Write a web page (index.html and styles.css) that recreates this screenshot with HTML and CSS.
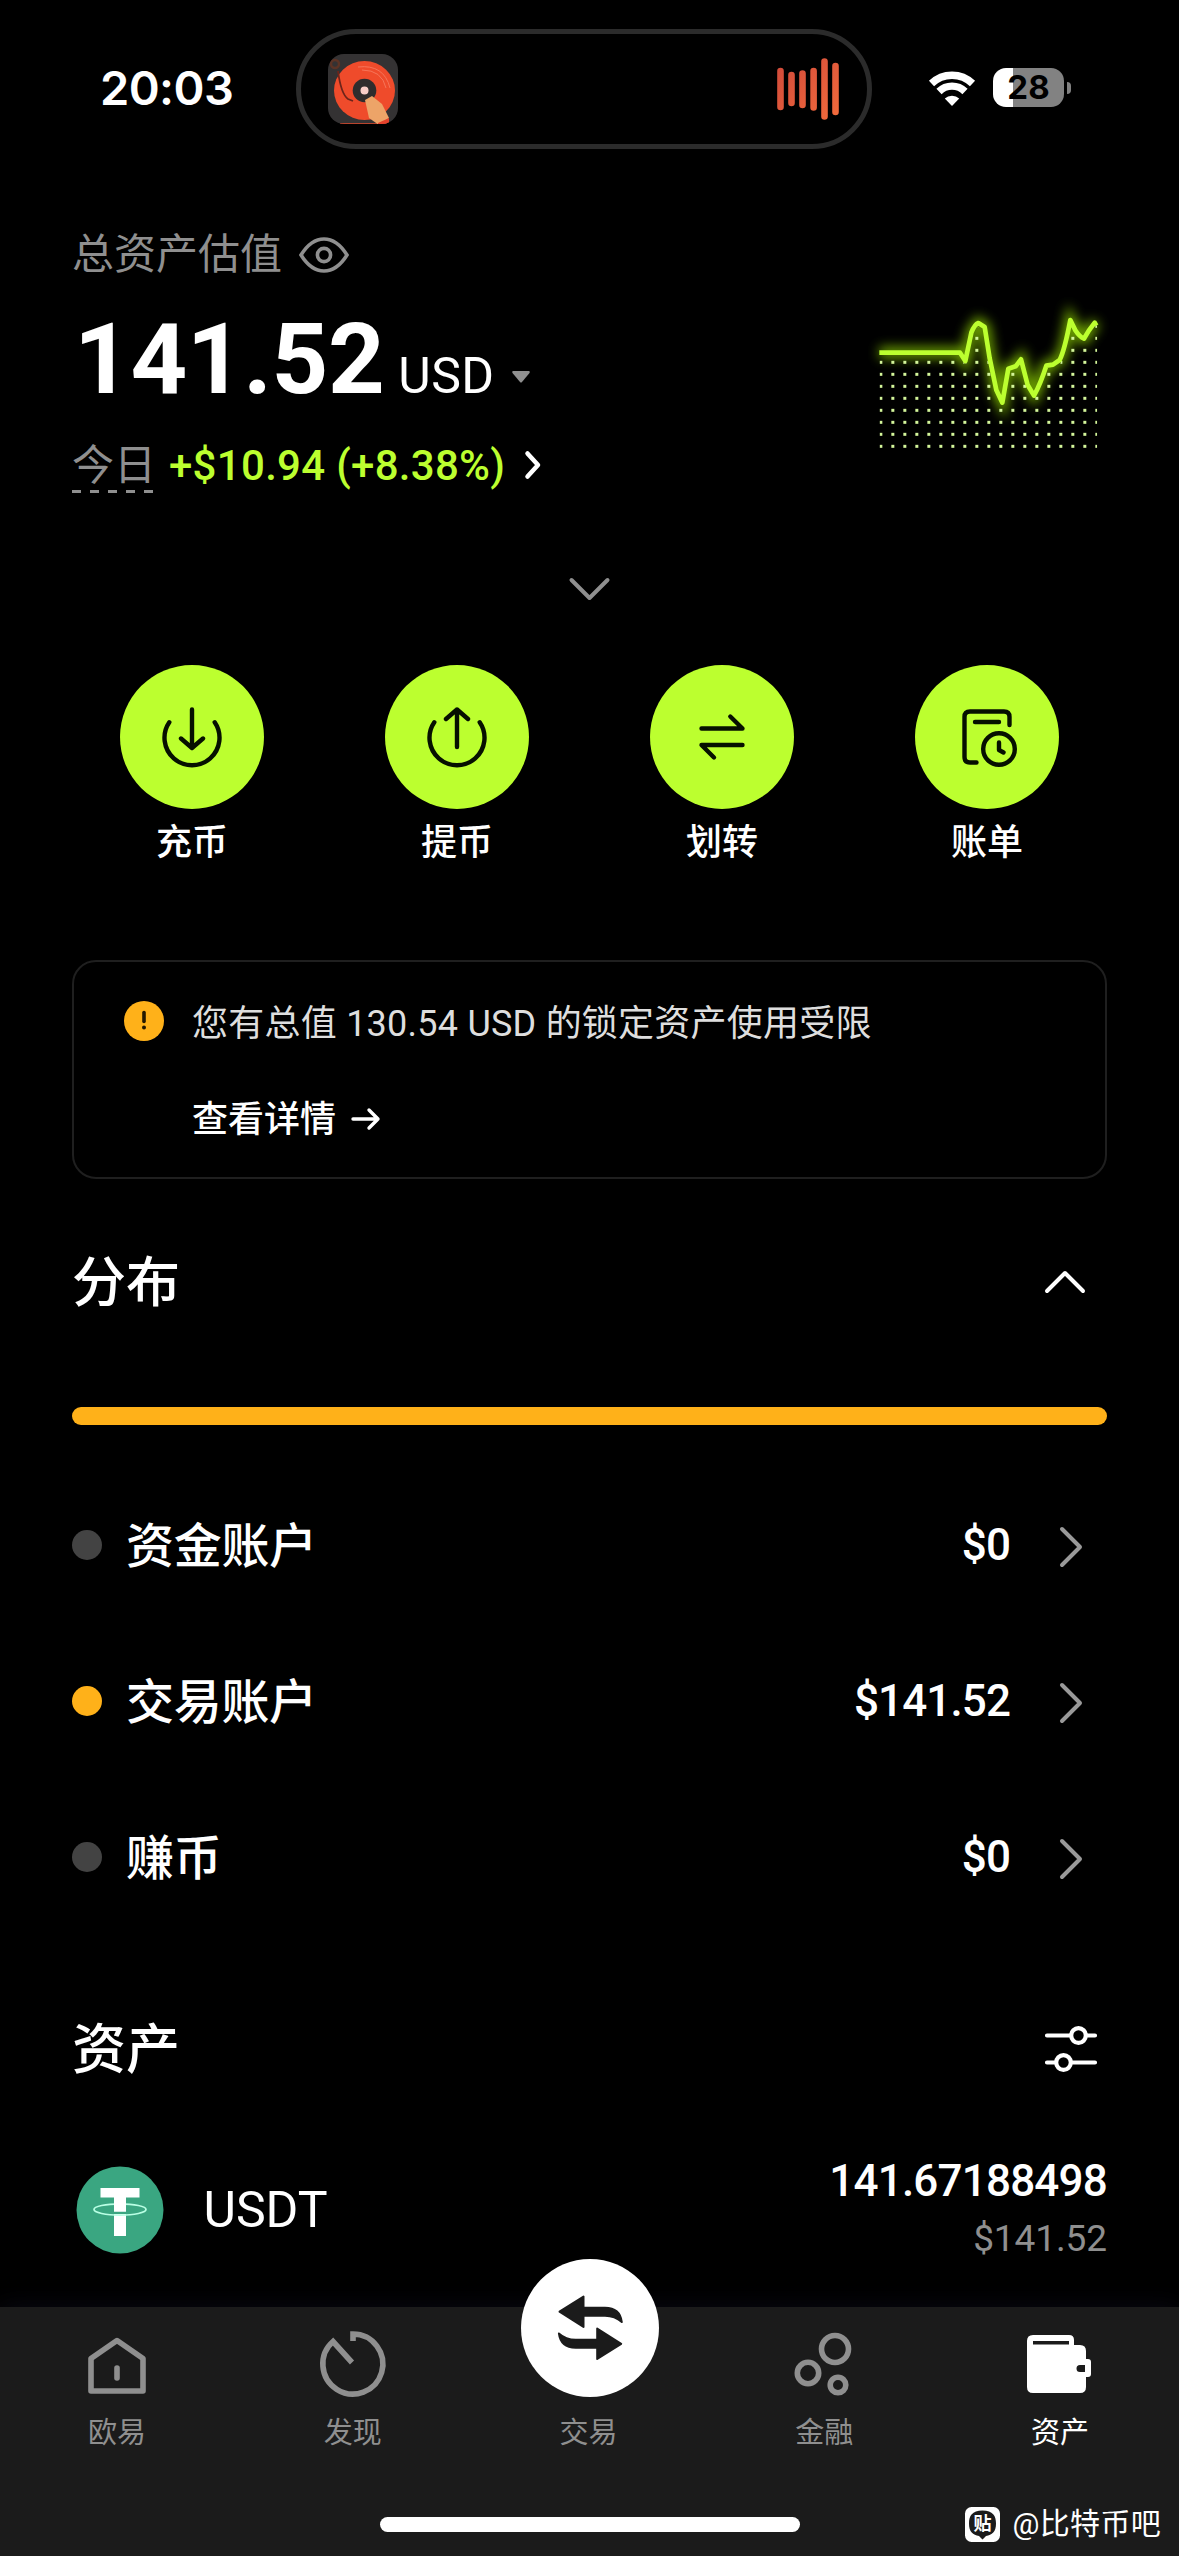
FILE: index.html
```html
<!DOCTYPE html>
<html lang="zh-CN">
<head>
<meta charset="utf-8">
<title>资产</title>
<link rel="stylesheet" href="styles.css">
</head>
<body>
<header class="status">
  <div class="status-time">20:03</div>
  <div class="island">
    <svg class="album" viewBox="0 0 70 70">
      <defs><clipPath id="cover"><rect width="70" height="70" rx="16"/></clipPath></defs>
      <g clip-path="url(#cover)">
        <rect width="70" height="70" fill="#343233"/>
        <circle cx="7" cy="10" r="4" fill="none" stroke="#5b3325" stroke-width="2.5"/>
        <path d="M12 69h50v2H12z" fill="#b8432c"/>
        <ellipse cx="36.500" cy="36.500" rx="30.500" ry="29.500" fill="#ef4b2b"/>
        <path d="M30 13q26-3 32 21M34 16q20 0 24 18" fill="none" stroke="#f5755a" stroke-width="1"/>
        <circle cx="36.500" cy="36.500" r="11.800" fill="#2f2c2d"/>
        <circle cx="36.500" cy="36.500" r="4" fill="#f7cdc8"/>
        <path d="M10 17Q13 40 20 45L25 47" fill="none" stroke="#6d241a" stroke-width="1.800"/>
        <path d="M37 46L44 42L54 50L61 64L51 71L41 64Z" fill="#eda468"/>
        <path d="M50 69L61 64V70H50Z" fill="#e5422c"/>
      </g>
    </svg>
    <svg class="wave" viewBox="776 56 64 66">
      <defs><linearGradient id="waveFill" gradientUnits="userSpaceOnUse" x1="776" y1="60" x2="840" y2="120"><stop offset="0" stop-color="#d0493a"/><stop offset="1" stop-color="#f46c3c"/></linearGradient></defs>
      <path d="M780.500 71v36M791.500 75v28M802.500 73.500v31.500M813.600 71v36.500M824.500 61.500v55M835.500 66v46" stroke="url(#waveFill)" stroke-width="6.600" stroke-linecap="round"/>
    </svg>
  </div>
  <svg class="wifi" viewBox="0 0 48 36">
    <path d="M3.500 13.500a29.500 29.500 0 0 1 41 0M11 21.500a18.500 18.500 0 0 1 26 0" fill="none" stroke="#fff" stroke-width="7.400"/>
    <path d="M24 36L16.800 28.600a10.300 10.300 0 0 1 14.400 0Z" fill="#fff"/>
  </svg>
  <div class="battery">28</div>
  <div class="battery-cap"></div>
</header>

<main class="content">
  <section class="summary">
    <div>
      <div class="summary-label">总资产估值
        <svg class="eye" viewBox="0 0 50 36"><path d="M2 18Q12 2 25 2T48 18Q38 34 25 34T2 18Z"/><circle cx="25" cy="18" r="6.600"/></svg>
      </div>
      <div class="amount"><span class="amount-value">141.52</span><span class="amount-unit">USD</span><svg class="caret" viewBox="0 0 18 12"><path d="M1 0h16q1.500 .5.500 2L10 11q-1 1-2 0L.500 2Q-.500.500 1 0Z"/></svg></div>
      <div class="today"><span class="today-label">今日</span><span class="gain">+$10.94 (+8.38%)</span><svg class="gain-arrow" viewBox="0 0 16 28"><path d="M2.500 2.500L13 14L2.500 25.500"/></svg></div>
    </div>
    <svg class="chart" viewBox="50 30 720 460">
      <defs>
        <pattern id="dots" patternUnits="userSpaceOnUse" x="87" y="140.500" width="36" height="36"><rect width="9" height="9" fill="#d3f59a"/></pattern>
        <clipPath id="under"><path d="M87 200H330L345 226L366 130L384 112L398 118L415 205L432 290L456 350L478 240L510 220L528 290L550 330L588 240L630 222L660 110L680 140L704 160L728 110L741 105V475H87Z"/></clipPath>
        <filter id="glow" filterUnits="userSpaceOnUse" x="20" y="0" width="780" height="500"><feGaussianBlur stdDeviation="18"/></filter>
      </defs>
      <path class="chart-glow" filter="url(#glow)" d="M87 188H329L345 213L363 128L384 99L403 111L418 205L438 300L456 338L474 236L496 229L512 208L532 285L551 317L588 227L608 224L628 210L645 165L660 90L680 127L701 146L723 112L738 98"/>
      <rect x="87" y="104" width="654" height="371" fill="url(#dots)" clip-path="url(#under)"/>
      <path class="chart-line" d="M87 188H329L345 213L363 128Q373 103 384 99L403 111L418 205L438 300L456 338L474 236L496 229L512 208L532 285L551 317Q571 280 588 227L608 224L628 210Q643 180 660 90L675 121Q688 141 701 146Q714 121 733 98L738 107"/>
    </svg>
  </section>

  <svg class="expand" viewBox="0 0 44 32"><path d="M3.500 7L21.500 25L39.500 7"/></svg>

  <nav class="actions">
    <a class="action"><svg class="action-icon" viewBox="0 0 144 144"><path d="M72 44.500V83M61 73.500L72 83L83 73.500M49.300 57.200A27.500 27.500 0 1 0 94.700 57.200"/></svg>充币</a>
    <a class="action"><svg class="action-icon" viewBox="0 0 144 144"><path d="M72 82V44.500M61 54L72 44.500L83 54M49.300 57.200A27.500 27.500 0 1 0 94.700 57.200"/></svg>提币</a>
    <a class="action"><svg class="action-icon" viewBox="0 0 144 144"><path d="M51.500 63.500H92.500L80.300 51.500M92.500 80H51.500L64 92.500"/></svg>划转</a>
    <a class="action"><svg class="action-icon" viewBox="0 0 144 144"><path d="M94.500 60V52Q94.500 46.500 89 46.500H55Q49.500 46.500 49.500 52V92Q49.500 97.500 55 97.500H61.500M60 57H84M84 77.500V85L88.500 87.500"/><circle cx="84" cy="84" r="15.800"/></svg>账单</a>
  </nav>

  <section class="notice">
    <svg class="notice-icon" viewBox="0 0 40 40"><circle cx="20" cy="20" r="20" fill="#ffb119"/><path d="M20 11.500V20.500" stroke="#241800" stroke-width="3.600" stroke-linecap="round"/><circle cx="20" cy="26.500" r="2" fill="#241800"/></svg>
    <p class="notice-text">您有总值 130.54 USD 的锁定资产使用受限</p>
    <a class="notice-link">查看详情<svg class="notice-arrow" viewBox="0 0 30 24"><path d="M2 12H27M18 3L27 12L18 21"/></svg></a>
  </section>

  <div class="section-head">
    <h2>分布</h2>
    <svg class="collapse" viewBox="0 0 44 30"><path d="M4 24L22 6L40 24"/></svg>
  </div>
  <div class="allocation"></div>
  <ul class="accounts">
    <li class="account"><i class="dot"></i><span class="account-name">资金账户</span><span class="account-value">$0</span><svg class="chevron" viewBox="0 0 24 42"><path d="M3 3L21 21L3 39"/></svg></li>
    <li class="account"><i class="dot dot-active"></i><span class="account-name">交易账户</span><span class="account-value">$141.52</span><svg class="chevron" viewBox="0 0 24 42"><path d="M3 3L21 21L3 39"/></svg></li>
    <li class="account"><i class="dot"></i><span class="account-name">赚币</span><span class="account-value">$0</span><svg class="chevron" viewBox="0 0 24 42"><path d="M3 3L21 21L3 39"/></svg></li>
  </ul>

  <div class="section-head assets-head">
    <h2>资产</h2>
    <svg class="filter" viewBox="0 0 52 48"><path d="M2 10.500H25M42 10.500H50M2 37.500H10M27 37.500H50"/><circle cx="33.500" cy="10.500" r="7.300"/><circle cx="18.500" cy="37.500" r="7.300"/></svg>
  </div>
  <div class="asset">
    <svg class="coin" viewBox="0 0 88 88">
      <circle cx="44" cy="44" r="43.500" fill="#3aa681"/>
      <path d="M24.500 22H63.500V31.500H50V70H38V31.500H24.500Z" fill="#fff"/>
      <path d="M38 45.500H50V48H38Z" fill="#3aa681"/>
      <ellipse cx="44" cy="43.500" rx="26" ry="5.600" fill="none" stroke="#b9ffe4" stroke-width="1.700"/>
      <path d="M38 31H50V45.500H38Z" fill="#fff"/>
    </svg>
    <span class="asset-name">USDT</span>
    <div class="asset-values"><div class="asset-amount">141.67188498</div><div class="asset-fiat">$141.52</div></div>
  </div>
</main>

<footer class="tabbar">
  <nav class="tabs">
    <a class="tab"><svg class="tab-icon" viewBox="0 0 72 72"><path d="M10 30.500L36 12.500L62 30.500V63H10Z" stroke-linejoin="round"/><path d="M36 40V50" stroke-linecap="round"/></svg>欧易</a>
    <a class="tab"><svg class="tab-icon" viewBox="0 0 72 72"><path d="M36 13V6A30 30 0 1 1 16 13.500L35 34.500"/></svg>发现</a>
    <a class="tab"><svg class="trade" viewBox="0 0 138 138"><circle cx="69" cy="69" r="69" fill="#fff"/><g fill="#1b1b1b" stroke="#1b1b1b" stroke-width="2" stroke-linejoin="round"><path d="M38.500 52.700L62.500 37.500V48.700H84Q99 48.700 100.800 63Q94 56.700 84 56.700H62.500V68Z"/><path d="M100.200 84.800L76.200 100V88.800H54.700Q39.700 88.800 37.900 74.500Q44.700 80.800 54.700 80.800H76.200V69.500Z"/></g></svg>交易</a>
    <a class="tab"><svg class="tab-icon" viewBox="0 0 72 72"><circle cx="47" cy="21" r="13.500"/><circle cx="20" cy="45" r="10.700"/><circle cx="50" cy="57" r="7.800"/></svg>金融</a>
    <a class="tab tab-active"><svg class="tab-icon wallet" viewBox="0 0 72 72"><path fill="#fff" fill-rule="evenodd" stroke="none" d="M8 7H44Q49 7 49 12V17H55Q61 17 61 23V31H63Q66 31 66 34V46Q66 49 63 49H61V59Q61 65 55 65H8Q2 65 2 59V13Q2 7 8 7ZM8 13V16.500H44V13ZM55 37A3.300 3.300 0 0 0 55 44H60V37Z"/></svg>资产</a>
  </nav>
  <div class="bottom">
    <div class="home-bar"></div>
    <div class="credit"><svg class="credit-icon" viewBox="0 0 35 35"><rect width="35" height="35" rx="6.500" fill="#fff"/><path d="M17.500 3.500C28 3.500 31 9 31 16.500C31 25 27 28 21 29L17.500 32.500L14 29C8 28 4 25 4 16.500C4 9 7 3.500 17.500 3.500Z" fill="#1b1b1b"/><text x="17.500" y="23" text-anchor="middle" class="credit-glyph">贴</text></svg>@比特币吧</div>
  </div>
</footer>
</body>
</html>
```

FILE: styles.css
```css
* { box-sizing: border-box; margin: 0; padding: 0; }

body {
  width: 1179px;
  height: 2556px;
  display: flex;
  flex-direction: column;
  overflow: hidden;
  background: #000;
  color: #fff;
  font-family: Roboto, "Noto Sans CJK SC", sans-serif;
}

svg { display: block; flex: none; overflow: visible; }

/* Status bar */
.status { display: flex; height: 178px; padding-top: 29px; }
.status-time {
  width: 296px;
  padding-left: 100px;
  font: 600 47px/118px Inter, sans-serif;
  letter-spacing: -0.6px;
}
.island {
  display: flex;
  align-items: center;
  justify-content: space-between;
  width: 576px;
  height: 120px;
  padding: 0 27px;
  border: 5px solid #2b2b2b;
  border-radius: 60px;
}
.album { width: 70px; height: 70px; }
.wave { width: 64px; height: 66px; }
.wifi { width: 48px; height: 36px; margin: 41px 17px 0 56px; }
.battery {
  width: 71px;
  height: 39px;
  margin-top: 39px;
  border-radius: 13px;
  background: linear-gradient(90deg, #fff 20px, #828282 20px);
  color: #000;
  font: 700 33px/39px Inter, sans-serif;
  text-align: center;
}
.battery-cap { width: 4px; height: 12px; margin: 53px 0 0 3px; border-radius: 0 4px 4px 0; background: #828282; }

.content { padding: 47px 72px 0; }

/* Balance summary */
.summary { display: flex; justify-content: space-between; }
.summary-label { display: flex; align-items: center; gap: 17px; height: 60px; color: #8f8f8f; font-size: 42px; line-height: 62px; }
.eye { width: 50px; height: 36px; fill: none; stroke: #8f8f8f; stroke-width: 3.6; }
.amount { display: flex; align-items: baseline; height: 100px; margin-top: 24px; line-height: 100px; white-space: nowrap; }
.amount-value { font-size: 99px; font-weight: 700; margin-left: 2px; letter-spacing: -0.4px; }
.amount-unit { margin-left: 14px; font-size: 50px; letter-spacing: 0.4px; }
.caret { width: 18px; height: 12px; margin-left: 18px; transform: translateY(-10px); fill: #8f8f8f; }
.today { display: flex; align-items: flex-start; height: 55px; margin-top: 29px; font-size: 42px; line-height: 56px; white-space: nowrap; }
.today-label {
  width: 81px;
  height: 55px;
  color: #8f8f8f;
  background: repeating-linear-gradient(90deg, #8f8f8f 0 9px, transparent 9px 18px) left bottom / 100% 3px no-repeat;
}
.gain { margin-left: 16px; color: #bcff2f; font-weight: 500; letter-spacing: 0.3px; }
.gain-arrow { width: 16px; height: 28px; margin: 13px 0 0 20px; fill: none; stroke: #fff; stroke-width: 4.5; stroke-linecap: round; stroke-linejoin: round; }
.chart { width: 240px; height: 153.33px; margin-top: 75px; }
.chart-line { fill: none; stroke: #bcff2f; stroke-width: 14; stroke-linejoin: round; }
.chart-glow { fill: none; stroke: #8fd400; stroke-width: 32; opacity: 0.8; }

.expand { width: 44px; height: 32px; margin: 80px auto 60px; fill: none; stroke: #8f8f8f; stroke-width: 4; stroke-linecap: round; stroke-linejoin: round; }

/* Quick actions */
.actions { display: grid; grid-template-columns: repeat(4, 265px); margin: 0 -12.5px; }
.action { display: flex; flex-direction: column; align-items: center; gap: 16px; font-size: 36px; font-weight: 500; line-height: 36px; }
.action-icon { width: 144px; height: 144px; border-radius: 50%; background: #bcff2f; fill: none; stroke: #061000; stroke-width: 4.4; stroke-linecap: round; stroke-linejoin: round; }

/* Restriction notice */
.notice {
  display: grid;
  grid-template-columns: 40px 1fr;
  grid-template-rows: 44px 44px;
  column-gap: 28px;
  row-gap: 52px;
  align-items: center;
  height: 219px;
  margin-top: 99px;
  padding: 40px 50px 0;
  border: 2px solid #1f1f1f;
  border-radius: 24px;
}
.notice-icon { width: 40px; height: 40px; margin-top: -7px; }
.notice-text { color: #dedede; font-size: 36px; line-height: 44px; letter-spacing: 0.24px; white-space: nowrap; }
.notice-link { grid-column: 2; display: flex; align-items: center; gap: 15px; font-size: 36px; font-weight: 500; line-height: 44px; }
.notice-arrow { width: 30px; height: 24px; margin-top: -2px; fill: none; stroke: #fff; stroke-width: 3.4; stroke-linecap: round; stroke-linejoin: round; }

/* Section headings */
.section-head { display: flex; align-items: center; justify-content: space-between; height: 60px; margin-top: 73px; }
.section-head h2 { padding-top: 3px; font-size: 54px; font-weight: 500; line-height: 60px; }
.collapse { width: 44px; height: 30px; margin-right: 20px; fill: none; stroke: #fff; stroke-width: 4; stroke-linecap: round; stroke-linejoin: round; }
.filter { width: 52px; height: 48px; margin-right: 10px; fill: none; stroke: #fff; stroke-width: 4.2; stroke-linecap: round; }
.assets-head { margin-top: 84px; }

/* Account distribution */
.allocation { height: 18px; margin-top: 95px; border-radius: 9px; background: #ffb119; }
.accounts { margin-top: 42px; list-style: none; }
.account { display: flex; align-items: center; height: 156px; line-height: 60px; }
.dot { width: 30px; height: 30px; border-radius: 50%; background: #434343; }
.dot-active { background: #ffb119; }
.account-name { flex: 1; margin: 4px 0 0 24px; font-size: 48px; font-weight: 500; letter-spacing: -0.3px; }
.account-value { margin-top: -1px; font-size: 44px; font-weight: 500; letter-spacing: -0.9px; }
.chevron { width: 24px; height: 42px; margin: 3px 24px 0 49px; fill: none; stroke: #999; stroke-width: 4; stroke-linecap: round; stroke-linejoin: round; }

/* Asset list */
.asset { display: flex; align-items: center; height: 116px; margin-top: 73px; }
.coin { width: 88px; height: 88px; margin-left: 3.5px; }
.asset-name { flex: 1; margin-left: 40px; font-size: 50px; line-height: 56px; }
.asset-values { text-align: right; line-height: 58px; }
.asset-amount { font-size: 44px; font-weight: 500; letter-spacing: -0.8px; }
.asset-fiat { color: #8f8f8f; font-size: 37px; letter-spacing: -0.1px; }

/* Bottom navigation */
.tabbar { height: 249px; margin-top: auto; padding-top: 21px; background: #1b1b1b; box-shadow: 0 0 24px rgba(30, 30, 60, 0.35); }
.tabs { display: grid; grid-template-columns: repeat(5, 1fr); padding-right: 1px; margin-left: -1px; }
.tab { display: flex; flex-direction: column; align-items: center; color: #8f8f8f; font-size: 29px; line-height: 40px; }
.tab-active { color: #fff; }
.tab-icon { width: 72px; height: 72px; margin-bottom: 13px; fill: none; stroke: #8f8f8f; stroke-width: 5.6; }
.wallet { margin-left: 2px; }
.trade { width: 138px; height: 138px; margin: -69px 0 16px 3px; }
.bottom { display: grid; grid-template-columns: 1fr 420px 1fr; align-items: center; height: 36px; margin-top: 53px; }
.home-bar { grid-column: 2; height: 15px; border-radius: 8px; background: #fff; }
.credit { display: flex; align-items: center; gap: 13px; justify-content: flex-end; padding-right: 18px; font-size: 30px; line-height: 34px; letter-spacing: 0.3px; white-space: nowrap; }
.credit-icon { width: 35px; height: 35px; }
.credit-glyph { fill: #fff; font: 700 18px "Noto Sans CJK SC", sans-serif; letter-spacing: 0; }
```
